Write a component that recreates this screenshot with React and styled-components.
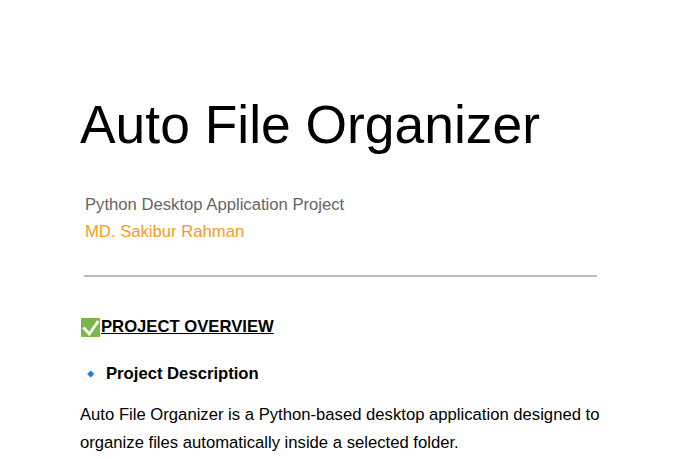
import React from "react";
import styled, { createGlobalStyle } from "styled-components";

const GlobalStyle = createGlobalStyle`
  html, body {
    margin: 0;
    padding: 0;
    background: #ffffff;
    overflow: hidden;
  }
`;

const Page = styled.div`
  width: 680px;
  height: 459px;
  overflow: hidden;
  box-sizing: border-box;
  padding: 92px 80px 0;
  font-family: "Liberation Sans", Arial, sans-serif;
  font-size: 16.67px;
  color: #000000;
`;

const Title = styled.h1`
  margin: 0;
  font-size: 53.4px;
  font-weight: 400;
  line-height: 66px;
`;

const Byline = styled.div`
  margin: 33px 0 0 5px;
`;

const Subtitle = styled.div`
  line-height: 27px;
  color: ${(p) => p.$color};
`;

const Divider = styled.hr`
  margin: 30px 3px 0 4px;
  border: 0;
  border-top: 2px solid #bababa;
`;

const Heading = styled.h2`
  margin: 38px 0 0;
  font-size: inherit;
  font-weight: 700;
  line-height: 24px;
  display: flex;
  align-items: center;
`;

const Underlined = styled.span`
  text-decoration: underline;
`;

const SubHeading = styled.h3`
  margin: 23px 0 0 5px;
  font-size: inherit;
  font-weight: 700;
  line-height: 24px;
  display: flex;
  align-items: center;
  gap: 11px;
`;

const Body = styled.p`
  margin: 15px 0 0;
  line-height: 28px;
`;

const CheckIcon = () => (
  <svg width="21" height="21" viewBox="0 0 21 21">
    <rect x="1" y="1" width="19" height="19" rx="1" fill="#7ab648" />
    <path d="M3.5 10.5l5.8 6.5 9-13" fill="none" stroke="#fff" strokeWidth="2.8" />
  </svg>
);

const DiamondIcon = () => (
  <svg width="10" height="10" viewBox="0 0 10 10">
    <path d="M5.7 1.4L9.3 5 5.7 8.6 2.1 5z" fill="#2a7fd5" />
  </svg>
);

export default function App() {
  return (
    <Page>
      <GlobalStyle />
      <Title>Auto File Organizer</Title>
      <Byline>
        <Subtitle $color="#666666">Python Desktop Application Project</Subtitle>
        <Subtitle $color="#f39c1f">MD. Sakibur Rahman</Subtitle>
      </Byline>
      <Divider />
      <Heading>
        <CheckIcon />
        <Underlined>PROJECT OVERVIEW</Underlined>
      </Heading>
      <SubHeading>
        <DiamondIcon />
        Project Description
      </SubHeading>
      <Body>
        Auto File Organizer is a Python-based desktop application designed to
        organize files automatically inside a selected folder.
      </Body>
    </Page>
  );
}
